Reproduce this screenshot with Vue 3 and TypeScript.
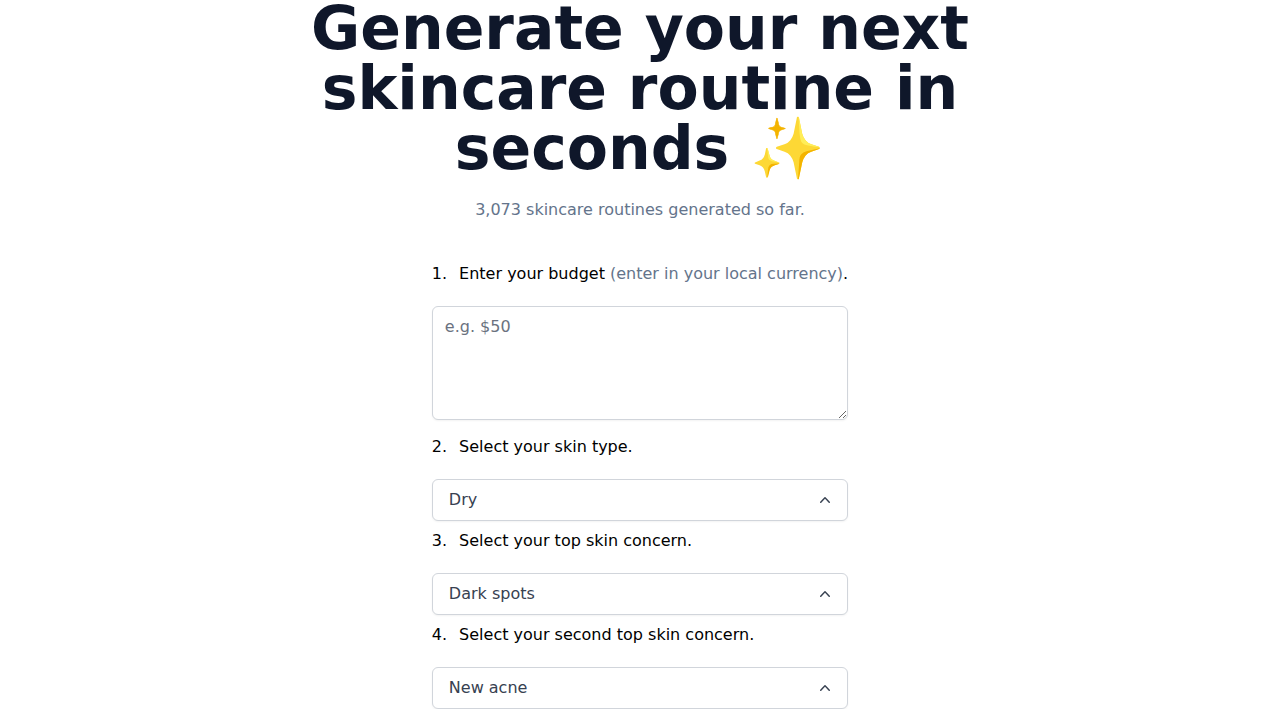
<script setup lang="ts">
import { ref } from 'vue'

interface Choice {
  id: string
  label: string
  value: string
  options: string[]
}

const generated = 3073
const budget = ref('')

const concerns = ['Dark spots', 'New acne', 'Acne scars', 'Wrinkles', 'Redness']

const choices = ref<Choice[]>([
  {
    id: 'skin-type',
    label: 'Select your skin type.',
    value: 'Dry',
    options: ['Dry', 'Oily', 'Combination', 'Normal'],
  },
  { id: 'concern', label: 'Select your top skin concern.', value: 'Dark spots', options: concerns },
  {
    id: 'second-concern',
    label: 'Select your second top skin concern.',
    value: 'New acne',
    options: concerns,
  },
])
</script>

<template>
  <main class="page">
    <h1 class="title">Generate your next skincare routine in seconds ✨</h1>
    <p class="count">{{ generated.toLocaleString('en-US') }} skincare routines generated so far.</p>

    <form class="form" @submit.prevent>
      <div class="field budget">
        <label class="label" for="budget">
          <span>1.</span>
          <span>Enter your budget <span class="hint">(enter in your local currency)</span>.</span>
        </label>
        <textarea id="budget" v-model="budget" class="control area" rows="4" placeholder="e.g. $50"></textarea>
      </div>

      <div v-for="(choice, index) in choices" :key="choice.id" class="field">
        <label class="label" :for="choice.id">
          <span>{{ index + 2 }}.</span>
          <span>{{ choice.label }}</span>
        </label>
        <div class="picker">
          <select :id="choice.id" v-model="choice.value" class="control select">
            <option v-for="option in choice.options" :key="option">{{ option }}</option>
          </select>
          <svg class="chevron" viewBox="0 0 20 20" fill="currentColor" aria-hidden="true">
            <path
              fill-rule="evenodd"
              clip-rule="evenodd"
              d="M14.77 12.79a.75.75 0 01-1.06-.02L10 8.832 6.29 12.77a.75.75 0 11-1.08-1.04l4.25-4.5a.75.75 0 011.08 0l4.25 4.5a.75.75 0 01-.02 1.06z"
            />
          </svg>
        </div>
      </div>
    </form>
  </main>
</template>

<style>
body {
  margin: 0;
  background: #fff;
}
</style>

<style scoped>
.page {
  display: flow-root;
  font: 16px/24px 'DejaVu Sans', sans-serif;
  color: #000;
}

.title {
  max-width: 708px;
  margin: -2px auto 20px;
  font-size: 60px;
  line-height: 60px;
  font-weight: 700;
  text-align: center;
  color: #0f172a;
}

.count {
  margin: 0 0 40px;
  text-align: center;
  color: #64748b;
}

.form {
  display: grid;
  gap: 8px;
  width: fit-content;
  max-width: 100%;
  margin: 0 auto;
}

.field {
  display: grid;
  gap: 20px;
}

.budget {
  margin-bottom: 7px;
}

.label {
  display: flex;
  gap: 12px;
}

.hint {
  color: #64748b;
}

.control {
  box-sizing: border-box;
  display: block;
  width: 100%;
  margin: 0;
  border: 1px solid #d1d5db;
  border-radius: 6px;
  background: #fff;
  box-shadow: 0 1px 2px rgb(0 0 0 / 5%);
  font: inherit;
}

.area {
  padding: 8px 12px;
  color: #000;
  resize: vertical;
}

.area::placeholder {
  color: #6b7280;
}

.picker {
  display: grid;
  align-items: center;
}

.picker > * {
  grid-area: 1 / 1;
}

.select {
  padding: 8px 40px 8px 16px;
  appearance: none;
  color: #374151;
}

.chevron {
  justify-self: end;
  width: 20px;
  height: 20px;
  margin-right: 13px;
  color: #374151;
  pointer-events: none;
}
</style>
